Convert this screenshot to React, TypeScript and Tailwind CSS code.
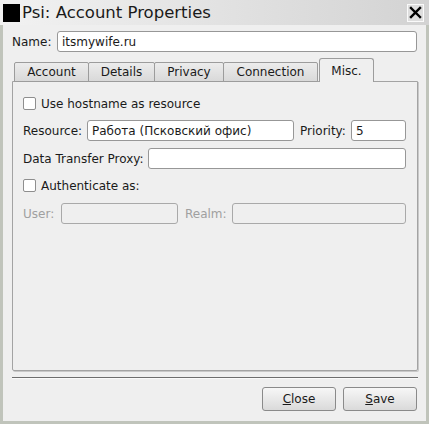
import React from "react";

const font = { fontFamily: '"DejaVu Sans", "Noto Sans", sans-serif' };

function Checkbox() {
  return <div className="w-[13px] h-[13px] bg-white border border-[#8e8e8e] rounded-[2px] shrink-0" />;
}

function Input({ value, className = "", disabled = false }: { value?: string; className?: string; disabled?: boolean }) {
  return (
    <div
      className={
        "h-[21px] border rounded-[3px] flex items-center pl-[4px] text-[12px] text-[#1a1a1a] " +
        (disabled ? "bg-[#efefef] border-[#a9a9a9] " : "bg-white border-[#979797] ") +
        className
      }
    >
      {value}
    </div>
  );
}

function Tab({ label, w }: { label: string; w: string }) {
  return (
    <div
      className={
        "h-[20px] border border-[#9c9c9c] bg-gradient-to-b from-[#ececec] to-[#d9d9d9] flex items-center justify-center text-[12px] text-[#1a1a1a] -ml-px first:ml-0 rounded-tl-[2px] rounded-tr-[2px] " +
        w
      }
    >
      {label}
    </div>
  );
}

export default function App() {
  return (
    <div className="w-[429px] h-[424px] bg-[#c0c4bb] flex flex-col" style={font}>
      {/* title bar */}
      <div className="h-[25px] flex items-center bg-gradient-to-r from-[#f2f2f2] to-[#d3d3d3] shrink-0">
        <div className="w-[17px] h-[18px] bg-black ml-[3px] mr-[2px]" />
        <div className="text-[16.5px] text-[#1a1a1a] leading-none mt-[1px]">Psi: Account Properties</div>
        <div className="ml-auto mr-[5px] w-[17px] h-[18px] border border-[#fafafa] bg-[#dedede] flex items-center justify-center">
          <svg width="13" height="13" viewBox="0 0 13 13">
            <path d="M2 2 L11 11 M11 2 L2 11" stroke="#000" strokeWidth="2.4" strokeLinecap="square" />
          </svg>
        </div>
      </div>
      {/* body */}
      <div className="flex-1 mx-[3px] mb-[3px] bg-[#efefef] flex flex-col pl-[9px] pr-[8px] pt-[6px]">
        <div className="flex items-center h-[21px]">
          <div className="w-[45px] text-[12px] text-[#1a1a1a]">Name:</div>
          <Input value="itsmywife.ru" className="flex-1 mr-px" />
        </div>
        {/* tabs */}
        <div className="mt-[6px] flex items-end h-[24px] pl-[2px] -mb-px relative z-10">
          <Tab label="Account" w="w-[75px]" />
          <Tab label="Details" w="w-[67px]" />
          <Tab label="Privacy" w="w-[70px]" />
          <Tab label="Connection" w="w-[95px]" />
          <div className="ml-[1px] h-[24px] w-[55px] border-x border-t border-[#9c9c9c] bg-[#efefef] rounded-t-[3px] flex justify-center pt-[3px] text-[12px] text-[#1a1a1a]">
            Misc.
          </div>
        </div>
        <div className="h-[290px] border border-[#a3a3a3] rounded-b-[2px] shadow-[1px_1px_0_#c8c8c8] flex flex-col pl-[10px] pr-[11px] pt-[11px] text-[12px] text-[#1a1a1a]">
          <div className="flex items-center h-[21px] gap-[5px]">
            <Checkbox />
            <span>Use hostname as resource</span>
          </div>
          <div className="flex items-center h-[21px] mt-[6px]">
            <div className="w-[64px]">Resource:</div>
            <Input value="Работа (Псковский офис)" className="w-[207px]" />
            <div className="ml-[6px] w-[51px]">Priority:</div>
            <Input value="5" className="flex-1" />
          </div>
          <div className="flex items-center h-[21px] mt-[7px]">
            <div className="w-[125px]">Data Transfer Proxy:</div>
            <Input className="flex-1" />
          </div>
          <div className="flex items-center h-[21px] mt-[6px] gap-[5px]">
            <Checkbox />
            <span>Authenticate as:</span>
          </div>
          <div className="flex items-center h-[21px] mt-[7px] text-[#a0a0a0]">
            <div className="w-[38px]">User:</div>
            <Input disabled className="w-[117px]" />
            <div className="ml-[7px] w-[47px]">Realm:</div>
            <Input disabled className="flex-1" />
          </div>
        </div>
        {/* separator */}
        <div className="mt-[6px] h-[2px] border-t border-[#6e6e6e] border-b border-b-[#fafafa]" />
        {/* buttons */}
        <div className="mt-[8px] flex justify-end gap-[7px] pr-px">
          <button className="w-[74px] h-[24px] border border-[#8a8a8a] rounded-[3px] bg-gradient-to-b from-[#f7f7f7] to-[#dadada] text-[12px] text-[#1a1a1a]">
            <span className="underline">C</span>lose
          </button>
          <button className="w-[74px] h-[24px] border border-[#8a8a8a] rounded-[3px] bg-gradient-to-b from-[#f7f7f7] to-[#dadada] text-[12px] text-[#1a1a1a]">
            <span className="underline">S</span>ave
          </button>
        </div>
      </div>
    </div>
  );
}
